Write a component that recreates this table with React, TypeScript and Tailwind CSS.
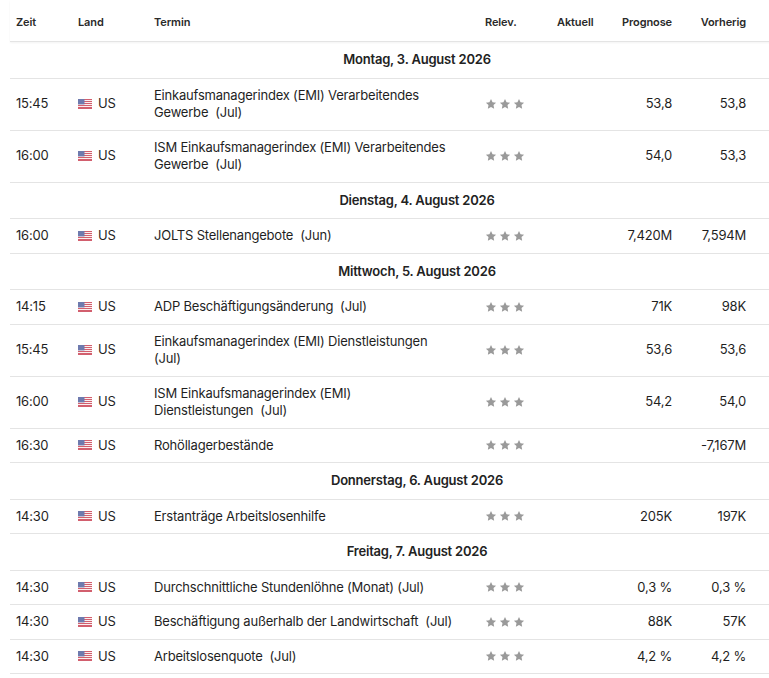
import React from "react";

type Ev = { time: string; name: string; period?: string; forecast?: string; previous?: string };
type Day = { date: string; events: Ev[] };

const days: Day[] = [
  {
    date: "Montag, 3. August 2026",
    events: [
      { time: "15:45", name: "Einkaufsmanagerindex (EMI) Verarbeitendes Gewerbe", period: "(Jul)", forecast: "53,8", previous: "53,8" },
      { time: "16:00", name: "ISM Einkaufsmanagerindex (EMI) Verarbeitendes Gewerbe", period: "(Jul)", forecast: "54,0", previous: "53,3" },
    ],
  },
  {
    date: "Dienstag, 4. August 2026",
    events: [{ time: "16:00", name: "JOLTS Stellenangebote", period: "(Jun)", forecast: "7,420M", previous: "7,594M" }],
  },
  {
    date: "Mittwoch, 5. August 2026",
    events: [
      { time: "14:15", name: "ADP Beschäftigungsänderung", period: "(Jul)", forecast: "71K", previous: "98K" },
      { time: "15:45", name: "Einkaufsmanagerindex (EMI) Dienstleistungen", period: "(Jul)", forecast: "53,6", previous: "53,6" },
      { time: "16:00", name: "ISM Einkaufsmanagerindex (EMI) Dienstleistungen", period: "(Jul)", forecast: "54,2", previous: "54,0" },
      { time: "16:30", name: "Rohöllagerbestände", previous: "-7,167M" },
    ],
  },
  {
    date: "Donnerstag, 6. August 2026",
    events: [{ time: "14:30", name: "Erstanträge Arbeitslosenhilfe", forecast: "205K", previous: "197K" }],
  },
  {
    date: "Freitag, 7. August 2026",
    events: [
      { time: "14:30", name: "Durchschnittliche Stundenlöhne (Monat) (Jul)", forecast: "0,3 %", previous: "0,3 %" },
      { time: "14:30", name: "Beschäftigung außerhalb der Landwirtschaft", period: "(Jul)", forecast: "88K", previous: "57K" },
      { time: "14:30", name: "Arbeitslosenquote", period: "(Jul)", forecast: "4,2 %", previous: "4,2 %" },
    ],
  },
];

const cols = "grid grid-cols-[62px_76px_331px_72px_50px_77px_74px_72px]";

function UsFlag() {
  return (
    <svg width="14" height="10" viewBox="0 0 14 10" className="opacity-80 shrink-0">
      <rect width="14" height="10" fill="#fff" />
      {[0, 2, 4, 6, 8].map((y) => (
        <rect key={y} x="0" y={y} width="14" height="1.1" fill="#c8384a" />
      ))}
      <rect x="0" y="9" width="14" height="1" fill="#c8384a" />
      <rect width="6.5" height="5.4" fill="#4a5a9a" />
    </svg>
  );
}

function Star() {
  return (
    <svg width="12" height="12" viewBox="0 0 24 24" fill="#9a9a9a">
      <path d="M12 1.8l3.1 6.6 7.1.9-5.2 4.9 1.3 7.1L12 17.8l-6.3 3.5L7 14.2 1.8 9.3l7.1-.9z" />
    </svg>
  );
}

export default function App() {
  return (
    <div className="w-[769px] overflow-hidden bg-white pl-[10px] font-['Inter',sans-serif] text-[13px] tracking-[-0.2px] text-[#1f1f1f]">
      <div className="w-[814px]">
        <div className={`${cols} h-[42px] items-center border-b border-[#e4e4e4] pt-[3px] text-[11px] font-semibold tracking-[-0.1px] text-[#2a2a2a] shadow-[0_1px_2px_rgba(0,0,0,0.05)]`}>
          <div className="px-[6px]">Zeit</div>
          <div className="px-[6px]">Land</div>
          <div className="px-[6px]">Termin</div>
          <div className="px-[6px]">Relev.</div>
          <div className="px-[6px]">Aktuell</div>
          <div className="px-[6px] text-right">Prognose</div>
          <div className="px-[6px] text-right">Vorherig</div>
          <div />
        </div>
        {days.map((d) => (
          <div key={d.date}>
            <div className="border-b border-[#e4e4e4] py-[9px] text-center font-semibold leading-[17.5px] text-[#222]">
              {d.date}
            </div>
            {d.events.map((e, i) => (
              <div key={i} className={`${cols} items-center border-b border-[#e4e4e4] py-2 leading-[17.5px]`}>
                <div className="px-[6px]">{e.time}</div>
                <div className="flex items-center gap-[6px] px-[6px]">
                  <UsFlag />
                  <span>US</span>
                </div>
                <div className="pl-[6px] pr-[26px]">
                  {e.name}
                  {e.period && <>{"\u00a0 "}<span>{e.period}</span></>}
                </div>
                <div className="flex items-center gap-[2px] px-[6px]">
                  <Star />
                  <Star />
                  <Star />
                </div>
                <div className="px-[6px]" />
                <div className="px-[6px] text-right">{e.forecast}</div>
                <div className="px-[6px] text-right">{e.previous}</div>
                <div />
              </div>
            ))}
          </div>
        ))}
      </div>
    </div>
  );
}
